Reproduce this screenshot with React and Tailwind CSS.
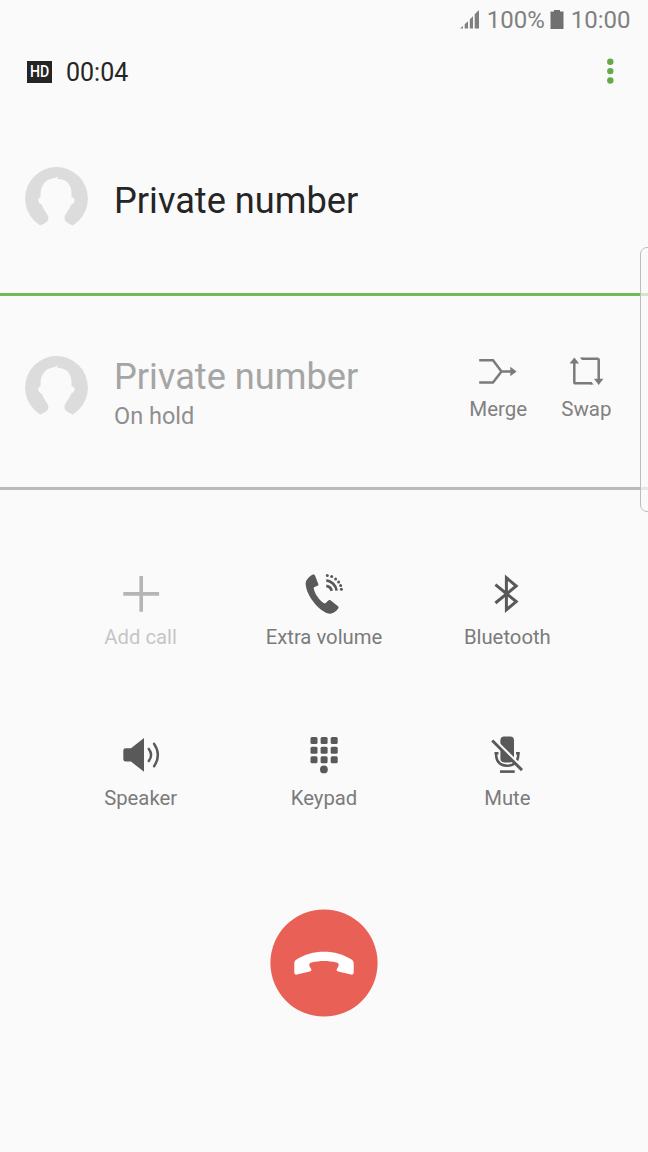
const ink = "#595959";

function Avatar({ className = "" }) {
  return (
    <svg className={`block size-[63px] shrink-0 ${className}`} viewBox="0 0 64 64">
      <circle cx="32" cy="32" r="31.9" fill="#dcdcdc" />
      <path
        fill="#fafafa"
        d="M15.8 59.2C18 58.4 21.4 56.6 23 54.6C24.5 52.6 23.8 50 22 47.2C19.8 44.2 18 41.3 16.8 38.2C14.4 37.2 13.4 35.4 13.5 33.4C13.6 31.7 14.6 31 15.9 30.8C15.3 24 17 17.5 22.5 13.8C26 11.3 30.5 11.6 33.8 9.6C33.7 10.5 33.3 11.4 32.6 12.2C40 11.5 45.2 16 46.6 21.5C47.3 24.5 47.4 27.5 47.2 30.8C49 31 50.4 32 50.4 33.9C50.4 35.9 49 37.6 47 38.2C45.8 41.5 43.8 44.4 41.8 47.2C40 49.8 39.4 52.4 41 54.6C42.6 56.6 46 58.4 48.2 59.2L46 66H18Z"
      />
    </svg>
  );
}

function SignalIcon() {
  return (
    <svg className="block w-5 h-5" viewBox="0 0 20 20" fill="#808080">
      <path d="M0 18.5L3 16V18.5ZM4.7 14.3L8 11.3V18.5H4.7ZM9.8 9.2L13 6.2V18.5H9.8ZM14.7 4.3L19 0V18.5H14.7Z" />
    </svg>
  );
}

function MergeIcon() {
  return (
    <svg className="block w-10 h-9" viewBox="0 0 40 36" fill="none" stroke="#7b7b7b" strokeWidth="2.5">
      <path d="M1.2 7.3H15L23.5 18.5L15 29.5H1.2M23.5 18.5H34" />
      <path d="M32.3 13.7V23.3L38.6 18.5Z" fill="#7b7b7b" stroke="none" />
    </svg>
  );
}

function SwapIcon() {
  return (
    <svg className="block w-9 h-9" viewBox="0 0 36 36" fill="none" stroke="#7b7b7b" strokeWidth="2.5">
      <path d="M14 5.8H29.3Q30.7 5.8 30.7 7.2V26M24 30.3H7.7Q6.3 30.3 6.3 28.9V10" />
      <path d="M11.8 4.55H15V7.05H14ZM23 29.05L26 31.55H22Z" fill="#7b7b7b" stroke="none" />
      <path d="M6.3 4.4L11.1 10.6H1.6ZM30.7 31.9L35.4 25.8H26Z" fill="#7b7b7b" stroke="none" />
    </svg>
  );
}

function AddIcon() {
  return (
    <svg className="block size-12 shrink-0" viewBox="0 0 48 48" stroke="#b5b5b5" strokeWidth="3.6">
      <path d="M24.2 6V41.8M6.3 23.9H42.1" />
    </svg>
  );
}

function VolumeCallIcon() {
  return (
    <svg className="block size-12 shrink-0" viewBox="0 0 48 48" fill={ink}>
      <path d="M6.4 10.4C8.4 7.4 11.2 5.3 12.9 4.5C13.8 4.2 14.6 4.5 15 5.4L18.2 13.8C18.6 14.8 18.3 15.4 17.5 15.8L14.6 17.1C13.8 17.5 13.6 18.2 13.8 19C15.3 24.6 19.5 30.4 23.7 33C24.6 33.6 25.3 33.5 26 32.8L28.3 30.5C29 29.8 29.8 29.8 30.5 30.3L38 36.3C38.8 36.9 38.8 37.7 38.2 38.5C36.2 41.4 33.4 43.3 30.7 43.7C26.5 44.2 19.8 39.7 14.5 33.3C9.4 27.2 6 20 5.7 14.6C5.6 12.9 5.7 11.5 6.4 10.4Z" />
      <g fill="none" stroke={ink} strokeWidth="2.7">
        <path d="M26.3 15.9A6.6 6.6 0 0 1 31.7 20.8" />
        <path d="M26.3 10.4A12 12 0 0 1 36.6 20.6" />
      </g>
      {/* dotted outer wave */}
      <circle cx="27.3" cy="5.5" r="1.5" />
      <circle cx="31.7" cy="6.6" r="1.5" />
      <circle cx="35.6" cy="8.9" r="1.5" />
      <circle cx="38.6" cy="12" r="1.5" />
      <circle cx="40.6" cy="15.5" r="1.5" />
      <circle cx="41.4" cy="19.3" r="1.5" />
    </svg>
  );
}

function BluetoothIcon() {
  return (
    <svg className="block size-12 shrink-0" viewBox="0 0 48 48" fill="none" stroke={ink} strokeWidth="3">
      <path d="M12.4 14.6L33.2 31.6L23.4 39.8V7.8L33.2 16L12.4 33" />
    </svg>
  );
}

function SpeakerIcon() {
  return (
    <svg className="block size-12 shrink-0" viewBox="0 0 48 48" fill={ink}>
      <path d="M8.7 17.2H14L27 7V40.8L14 30.6H8.7Q6.3 30.6 6.3 28.2V19.6Q6.3 17.2 8.7 17.2Z" />
      <path d="M31.8 17.9Q36.4 23.8 31.8 30M37.1 12.9Q44.6 23.8 37.1 35.2" fill="none" stroke={ink} strokeWidth="2.5" strokeLinecap="round" />
    </svg>
  );
}

function KeypadIcon() {
  return (
    <svg className="block size-12 shrink-0" viewBox="0 0 48 48" fill={ink}>
      {[6, 15.7, 25.3].map((y) =>
        [10.5, 20.6, 30.7].map((x) => (
          <rect key={`${x}-${y}`} x={x} y={y} width="7" height="7" rx="1.5" />
        ))
      )}
      <circle cx="23.9" cy="38.4" r="3.9" />
    </svg>
  );
}

function MuteIcon() {
  return (
    <svg className="block size-12 shrink-0" viewBox="0 0 48 48" fill={ink}>
      <rect x="17.4" y="5.4" width="13.6" height="26" rx="3.8" />
      <path d="M11.5 22.2H15.5M13 22.2C13 30.6 17.4 34.7 24.2 34.7C31 34.7 35.3 30.6 35.4 22.2M33 22.2H36.8" fill="none" stroke={ink} strokeWidth="2.5" />
      <path d="M10.4 8.3L40.4 38.1" stroke="#fafafa" strokeWidth="3.6" />
      <path d="M9.2 9.5L39 39.1" stroke={ink} strokeWidth="2.9" />
      <path d="M17 40.6H31.7" stroke={ink} strokeWidth="2.6" />
    </svg>
  );
}

const actions = [
  { label: "Add call", Icon: AddIcon, disabled: true },
  { label: "Extra volume", Icon: VolumeCallIcon },
  { label: "Bluetooth", Icon: BluetoothIcon },
  { label: "Speaker", Icon: SpeakerIcon },
  { label: "Keypad", Icon: KeypadIcon },
  { label: "Mute", Icon: MuteIcon },
];

export default function App() {
  return (
    <div className="relative w-[648px] h-[1152px] overflow-hidden bg-[#fafafa] font-[Roboto,sans-serif] text-[#252525]">
      {/* Status bar */}
      <div className="flex h-10 items-center justify-end pr-[17.5px] text-2xl text-[#808080]">
        <SignalIcon />
        <span className="ml-[7px]">100%</span>
        <svg className="ml-[5px] block w-[14px] h-5" viewBox="0 0 14 20" fill="#707070">
          <path d="M4 0H10V1.5H13.5V19H.5V1.5H4Z" />
        </svg>
        <span className="ml-[7px]">10:00</span>
      </div>

      {/* Call timer */}
      <header className="flex h-16 items-center justify-between pl-[27px] pr-[34px]">
        <div className="flex items-center">
          <span className="flex w-[25px] h-[22px] items-center justify-center bg-[#252525] text-[17px] font-medium text-white">
            <span className="scale-x-[0.83]">HD</span>
          </span>
          <span className="ml-[14px] pt-0.5 text-[25px]">00:04</span>
        </div>
        <button className="mb-0.5 flex flex-col" aria-label="More options">
          <svg className="block w-[7px] h-[26px]" viewBox="0 0 7 26" fill="#64aa4b">
            <circle cx="3.3" cy="3.7" r="3.2" />
            <circle cx="3.3" cy="13.1" r="3.2" />
            <circle cx="3.3" cy="22.5" r="3.2" />
          </svg>
        </button>
      </header>

      {/* Active call */}
      <section className="flex h-48 items-center border-b-3 border-[#74b85c] pl-[25px]">
        <Avatar />
        <h1 className="ml-[26px] mt-1 text-[36.2px] leading-10">Private number</h1>
      </section>

      {/* Held call */}
      <section className="flex h-[194px] items-center border-b-3 border-[#bababa] pl-[25px] pr-[36.5px]">
        <Avatar className="mb-[9px]" />
        <div className="ml-[26px] grow pt-[5px]">
          <h2 className="text-[36.2px] leading-10 text-[#a5a5a5]">Private number</h2>
          <p className="mt-[3px] text-[23.5px] leading-8 text-[#8f8f8f]">On hold</p>
        </div>
        <div className="mb-2 flex gap-[34px] text-[20.5px] leading-7 text-[#808080]">
          <button className="flex flex-col items-center gap-1.5">
            <MergeIcon />
            Merge
          </button>
          <button className="flex flex-col items-center gap-1.5">
            <SwapIcon />
            Swap
          </button>
        </div>
      </section>

      {/* In-call actions */}
      <div className="mx-[49px] mt-20 grid grid-cols-3 gap-y-20 text-[20.3px] leading-7">
        {actions.map(({ label, Icon, disabled }) => (
          <button
            key={label}
            disabled={disabled}
            className={`flex h-[81px] flex-col items-center gap-[5px] ${disabled ? "text-[#c6c6c6]" : "text-[#7b7b7b]"}`}
          >
            <Icon />
            {label}
          </button>
        ))}
      </div>

      <button className="mx-auto mt-[97px] block" aria-label="End call">
        <svg className="block size-[108px]" viewBox="0 0 108 108">
          <circle cx="54" cy="54" r="53.6" fill="#e96056" />
          <path
            transform="translate(22 38.3)"
            fill="#fff"
            d="M2.3 16.2C2.4 14.3 3.1 13.3 4.5 12.3C20 1.8 44 1.8 59.5 12.3C60.9 13.3 61.6 14.3 61.7 16.2V25.2C61.7 26.8 60.6 27.6 59 27.3L46.2 24.2C44.8 23.8 44.2 22.8 44.9 21.7L46.3 19.2C47.3 17.3 46.7 15.6 44.6 15.1C36.5 13.1 27.5 13.1 19.4 15.1C17.3 15.6 16.7 17.3 17.7 19.2L19.1 21.7C19.8 22.8 19.2 23.8 17.8 24.2L5 27.3C3.4 27.6 2.3 26.8 2.3 25.2Z"
          />
        </svg>
      </button>

      {/* Edge panel handle */}
      <div className="absolute left-[640px] top-[247px] h-[265px] w-4 rounded-[7px] border border-[#bdbdbd] bg-[#fafafa]/70 bg-clip-padding" />
    </div>
  );
}
